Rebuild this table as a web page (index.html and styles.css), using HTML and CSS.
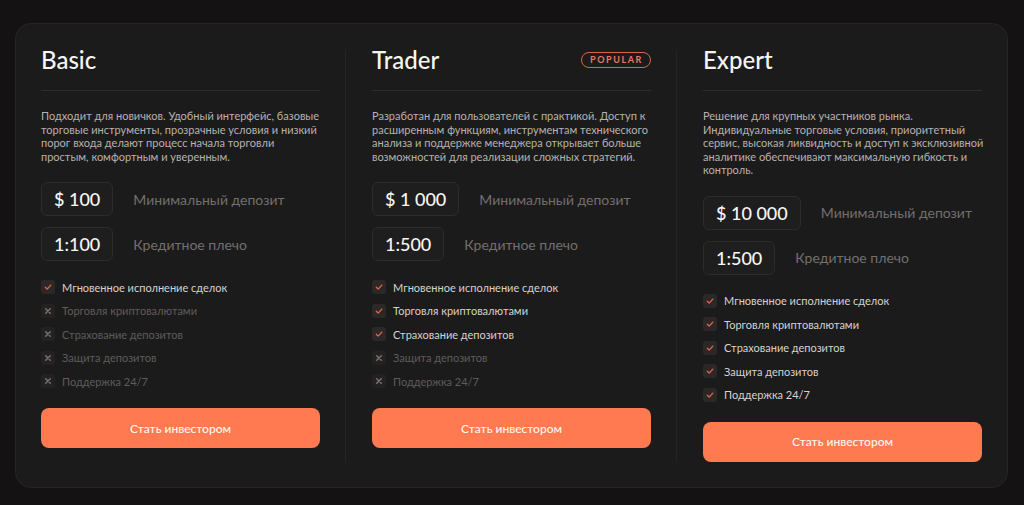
FILE: index.html
```html
<!DOCTYPE html>
<html lang="ru">
<head>
<meta charset="utf-8">
<title>Тарифы</title>
<link rel="stylesheet" href="styles.css">
</head>
<body>
<div class="page">
  <section class="plans">
    <div class="plan">
      <div class="plan-head"><h2 class="plan-title">Basic</h2></div>
      <p class="plan-desc">Подходит для новичков. Удобный интерфейс, базовые торговые инструменты, прозрачные условия и низкий порог входа делают процесс начала торговли простым, комфортным и уверенным.</p>
      <div class="stats">
        <div class="stat"><span class="stat-val">$ 100</span><span class="stat-label">Минимальный депозит</span></div>
        <div class="stat"><span class="stat-val">1:100</span><span class="stat-label">Кредитное плечо</span></div>
      </div>
      <ul class="features">
        <li class="feat on"><span class="box"><svg viewBox="0 0 14 14"><path d="M4.3 7.2l1.9 1.9 3.6-4"/></svg></span>Мгновенное исполнение сделок</li>
        <li class="feat off"><span class="box"><svg viewBox="0 0 14 14"><path d="M4.7 4.7l4.6 4.6M9.3 4.7l-4.6 4.6"/></svg></span>Торговля криптовалютами</li>
        <li class="feat off"><span class="box"><svg viewBox="0 0 14 14"><path d="M4.7 4.7l4.6 4.6M9.3 4.7l-4.6 4.6"/></svg></span>Страхование депозитов</li>
        <li class="feat off"><span class="box"><svg viewBox="0 0 14 14"><path d="M4.7 4.7l4.6 4.6M9.3 4.7l-4.6 4.6"/></svg></span>Защита депозитов</li>
        <li class="feat off"><span class="box"><svg viewBox="0 0 14 14"><path d="M4.7 4.7l4.6 4.6M9.3 4.7l-4.6 4.6"/></svg></span>Поддержка 24/7</li>
      </ul>
      <button class="cta">Стать инвестором</button>
    </div>
    <div class="plan">
      <div class="plan-head"><h2 class="plan-title">Trader</h2><span class="badge">POPULAR</span></div>
      <p class="plan-desc">Разработан для пользователей с практикой. Доступ к расширенным функциям, инструментам технического анализа и поддержке менеджера открывает больше возможностей для реализации сложных стратегий.</p>
      <div class="stats">
        <div class="stat"><span class="stat-val">$ 1 000</span><span class="stat-label">Минимальный депозит</span></div>
        <div class="stat"><span class="stat-val">1:500</span><span class="stat-label">Кредитное плечо</span></div>
      </div>
      <ul class="features">
        <li class="feat on"><span class="box"><svg viewBox="0 0 14 14"><path d="M4.3 7.2l1.9 1.9 3.6-4"/></svg></span>Мгновенное исполнение сделок</li>
        <li class="feat on"><span class="box"><svg viewBox="0 0 14 14"><path d="M4.3 7.2l1.9 1.9 3.6-4"/></svg></span>Торговля криптовалютами</li>
        <li class="feat on"><span class="box"><svg viewBox="0 0 14 14"><path d="M4.3 7.2l1.9 1.9 3.6-4"/></svg></span>Страхование депозитов</li>
        <li class="feat off"><span class="box"><svg viewBox="0 0 14 14"><path d="M4.7 4.7l4.6 4.6M9.3 4.7l-4.6 4.6"/></svg></span>Защита депозитов</li>
        <li class="feat off"><span class="box"><svg viewBox="0 0 14 14"><path d="M4.7 4.7l4.6 4.6M9.3 4.7l-4.6 4.6"/></svg></span>Поддержка 24/7</li>
      </ul>
      <button class="cta">Стать инвестором</button>
    </div>
    <div class="plan">
      <div class="plan-head"><h2 class="plan-title">Expert</h2></div>
      <p class="plan-desc">Решение для крупных участников рынка. Индивидуальные торговые условия, приоритетный сервис, высокая ликвидность и доступ к эксклюзивной аналитике обеспечивают максимальную гибкость и контроль.</p>
      <div class="stats">
        <div class="stat"><span class="stat-val">$ 10 000</span><span class="stat-label">Минимальный депозит</span></div>
        <div class="stat"><span class="stat-val">1:500</span><span class="stat-label">Кредитное плечо</span></div>
      </div>
      <ul class="features">
        <li class="feat on"><span class="box"><svg viewBox="0 0 14 14"><path d="M4.3 7.2l1.9 1.9 3.6-4"/></svg></span>Мгновенное исполнение сделок</li>
        <li class="feat on"><span class="box"><svg viewBox="0 0 14 14"><path d="M4.3 7.2l1.9 1.9 3.6-4"/></svg></span>Торговля криптовалютами</li>
        <li class="feat on"><span class="box"><svg viewBox="0 0 14 14"><path d="M4.3 7.2l1.9 1.9 3.6-4"/></svg></span>Страхование депозитов</li>
        <li class="feat on"><span class="box"><svg viewBox="0 0 14 14"><path d="M4.3 7.2l1.9 1.9 3.6-4"/></svg></span>Защита депозитов</li>
        <li class="feat on"><span class="box"><svg viewBox="0 0 14 14"><path d="M4.3 7.2l1.9 1.9 3.6-4"/></svg></span>Поддержка 24/7</li>
      </ul>
      <button class="cta">Стать инвестором</button>
    </div>
  </section>
</div>
</body>
</html>
```
FILE: styles.css
```css
* { box-sizing: border-box; }
html, body { margin: 0; padding: 0; }
body {
  background: #141212;
  font-family: Lato, "Noto Sans", sans-serif;
  color: #f2f0ef;
  width: 1024px;
  height: 505px;
  overflow: hidden;
}
.page {
  padding: 23px 16px 0 15px;
}
.plans {
  width: 993px;
  display: grid;
  grid-template-columns: 279px 279px 279px;
  column-gap: 52px;
  padding: 24px 25px 25px 25px;
  background: #1c1b1b;
  border: 1px solid #262424;
  border-radius: 16px;
}
.plan {
  display: flex;
  flex-direction: column;
  position: relative;
}
.plan + .plan::before {
  content: "";
  position: absolute;
  left: -27px;
  top: 2px;
  bottom: 0;
  width: 1px;
  background: #252323;
}
.plan-head {
  display: flex;
  justify-content: space-between;
  align-items: center;
  height: 43px;
  border-bottom: 1px solid #2f2c2c;
  padding-bottom: 18px;
}
.plan-title {
  margin: 0;
  font-size: 24px;
  line-height: 24px;
  font-weight: 500;
  color: #f6f5f4;
}
.badge {
  font-size: 9px;
  font-weight: 700;
  letter-spacing: 1.6px;
  color: #e8795a;
  border: 1px solid #d2684c;
  border-radius: 9px;
  padding: 2px 7px 2px 8px;
  line-height: 10px;
}
.plan-desc {
  margin: 18px -4px 0 0;
  font-size: 11px;
  line-height: 13.5px;
  color: #b7b2b0;
}
.stats {
  margin-top: 19px;
  display: flex;
  flex-direction: column;
  gap: 11px;
}
.stat {
  display: flex;
  align-items: center;
  gap: 20px;
}
.stat-val {
  height: 34px;
  padding: 0 12px;
  display: flex;
  align-items: center;
  font-size: 18px;
  font-weight: 500;
  color: #f7f6f5;
  background: #1f1e1e;
  border: 1px solid #2d2b2b;
  border-radius: 6px;
}
.stat-label {
  font-size: 14px;
  color: #736f6e;
}
.features {
  list-style: none;
  margin: 18px 0 0;
  padding: 0;
  display: flex;
  flex-direction: column;
  gap: 7.5px;
}
.feat {
  display: flex;
  align-items: center;
  gap: 7px;
  height: 16px;
  font-size: 11px;
}
.feat.on { color: #d6d2d0; }
.feat.off { color: #5f5b5a; }
.box {
  width: 14px;
  height: 14px;
  border-radius: 3px;
  background: #2c2827;
  display: flex;
}
.box svg {
  width: 14px;
  height: 14px;
  fill: none;
  stroke-width: 1.3;
  stroke-linecap: round;
  stroke-linejoin: round;
}
.feat.on .box svg { stroke: #e8674f; }
.feat.off .box { background: #242121; }
.feat.off .box svg { stroke: #77716f; stroke-width: 1.5; }
.cta {
  margin-top: 19px;
  height: 40px;
  width: 100%;
  border: none;
  border-radius: 8px;
  background: #ff7a50;
  color: #fff6f2;
  font-family: Lato, "Noto Sans", sans-serif;
  font-size: 12px;
  font-weight: 500;
  cursor: pointer;
}
```
